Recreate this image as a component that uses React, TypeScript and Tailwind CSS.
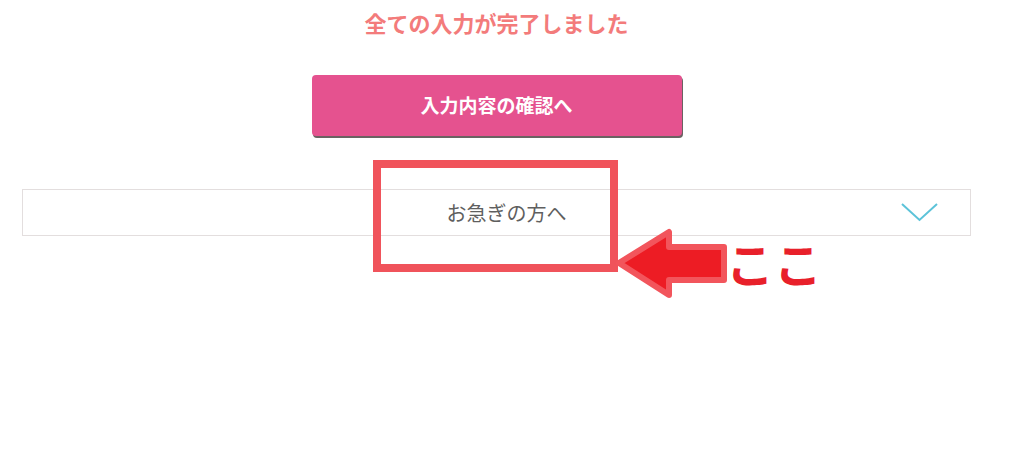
const FONT = { fontFamily: '"Noto Sans CJK JP", "Noto Sans", sans-serif' }

function Chevron() {
  return (
    <svg width="37" height="19" viewBox="0 0 37 19" className="shrink-0">
      <path d="M1 1 L18.5 17 L36 1" fill="none" stroke="#5cc3d9" strokeWidth="2" />
    </svg>
  )
}

export default function App() {
  return (
    <div className="relative h-[460px] w-full overflow-hidden bg-white" style={FONT}>
      <div className="ml-[22px] w-[949px]">
        <p className="pt-[6px] text-center text-[22px] font-bold leading-[32px] text-[#f37b7b]">
          全ての入力が完了しました
        </p>

        <button className="mx-auto mt-[37px] block h-[61px] w-[370px] rounded-[4px] bg-[#e5528f] text-[19px] font-bold text-white shadow-[1px_2px_0_#6b6262]">
          入力内容の確認へ
        </button>

        {/* アコーディオン */}
        <div className="mt-[53px] flex h-[47px] items-center border border-[#e3dede]">
          <span className="flex-1 pl-[89px] text-center text-[20px] text-[#5f5f5f]">お急ぎの方へ</span>
          <div className="mr-[32px]">
            <Chevron />
          </div>
        </div>
      </div>

      {/* 注釈 */}
      <div className="absolute left-[373px] top-[160px] h-[112px] w-[245px] border-[8px] border-[#f0535b]" />
      <svg className="absolute left-[612px] top-[226px]" width="118" height="76" viewBox="0 0 118 76">
        <polygon
          points="7,37 57,6 57,21 112,21 112,54 57,54 57,69"
          fill="#ed1c24"
          stroke="#f2555c"
          strokeWidth="6"
          strokeLinejoin="round"
        />
      </svg>
      <span className="absolute left-[726px] top-[232px] text-[48px] font-bold leading-[60px] text-[#e8202a]">
        ここ
      </span>
    </div>
  )
}
